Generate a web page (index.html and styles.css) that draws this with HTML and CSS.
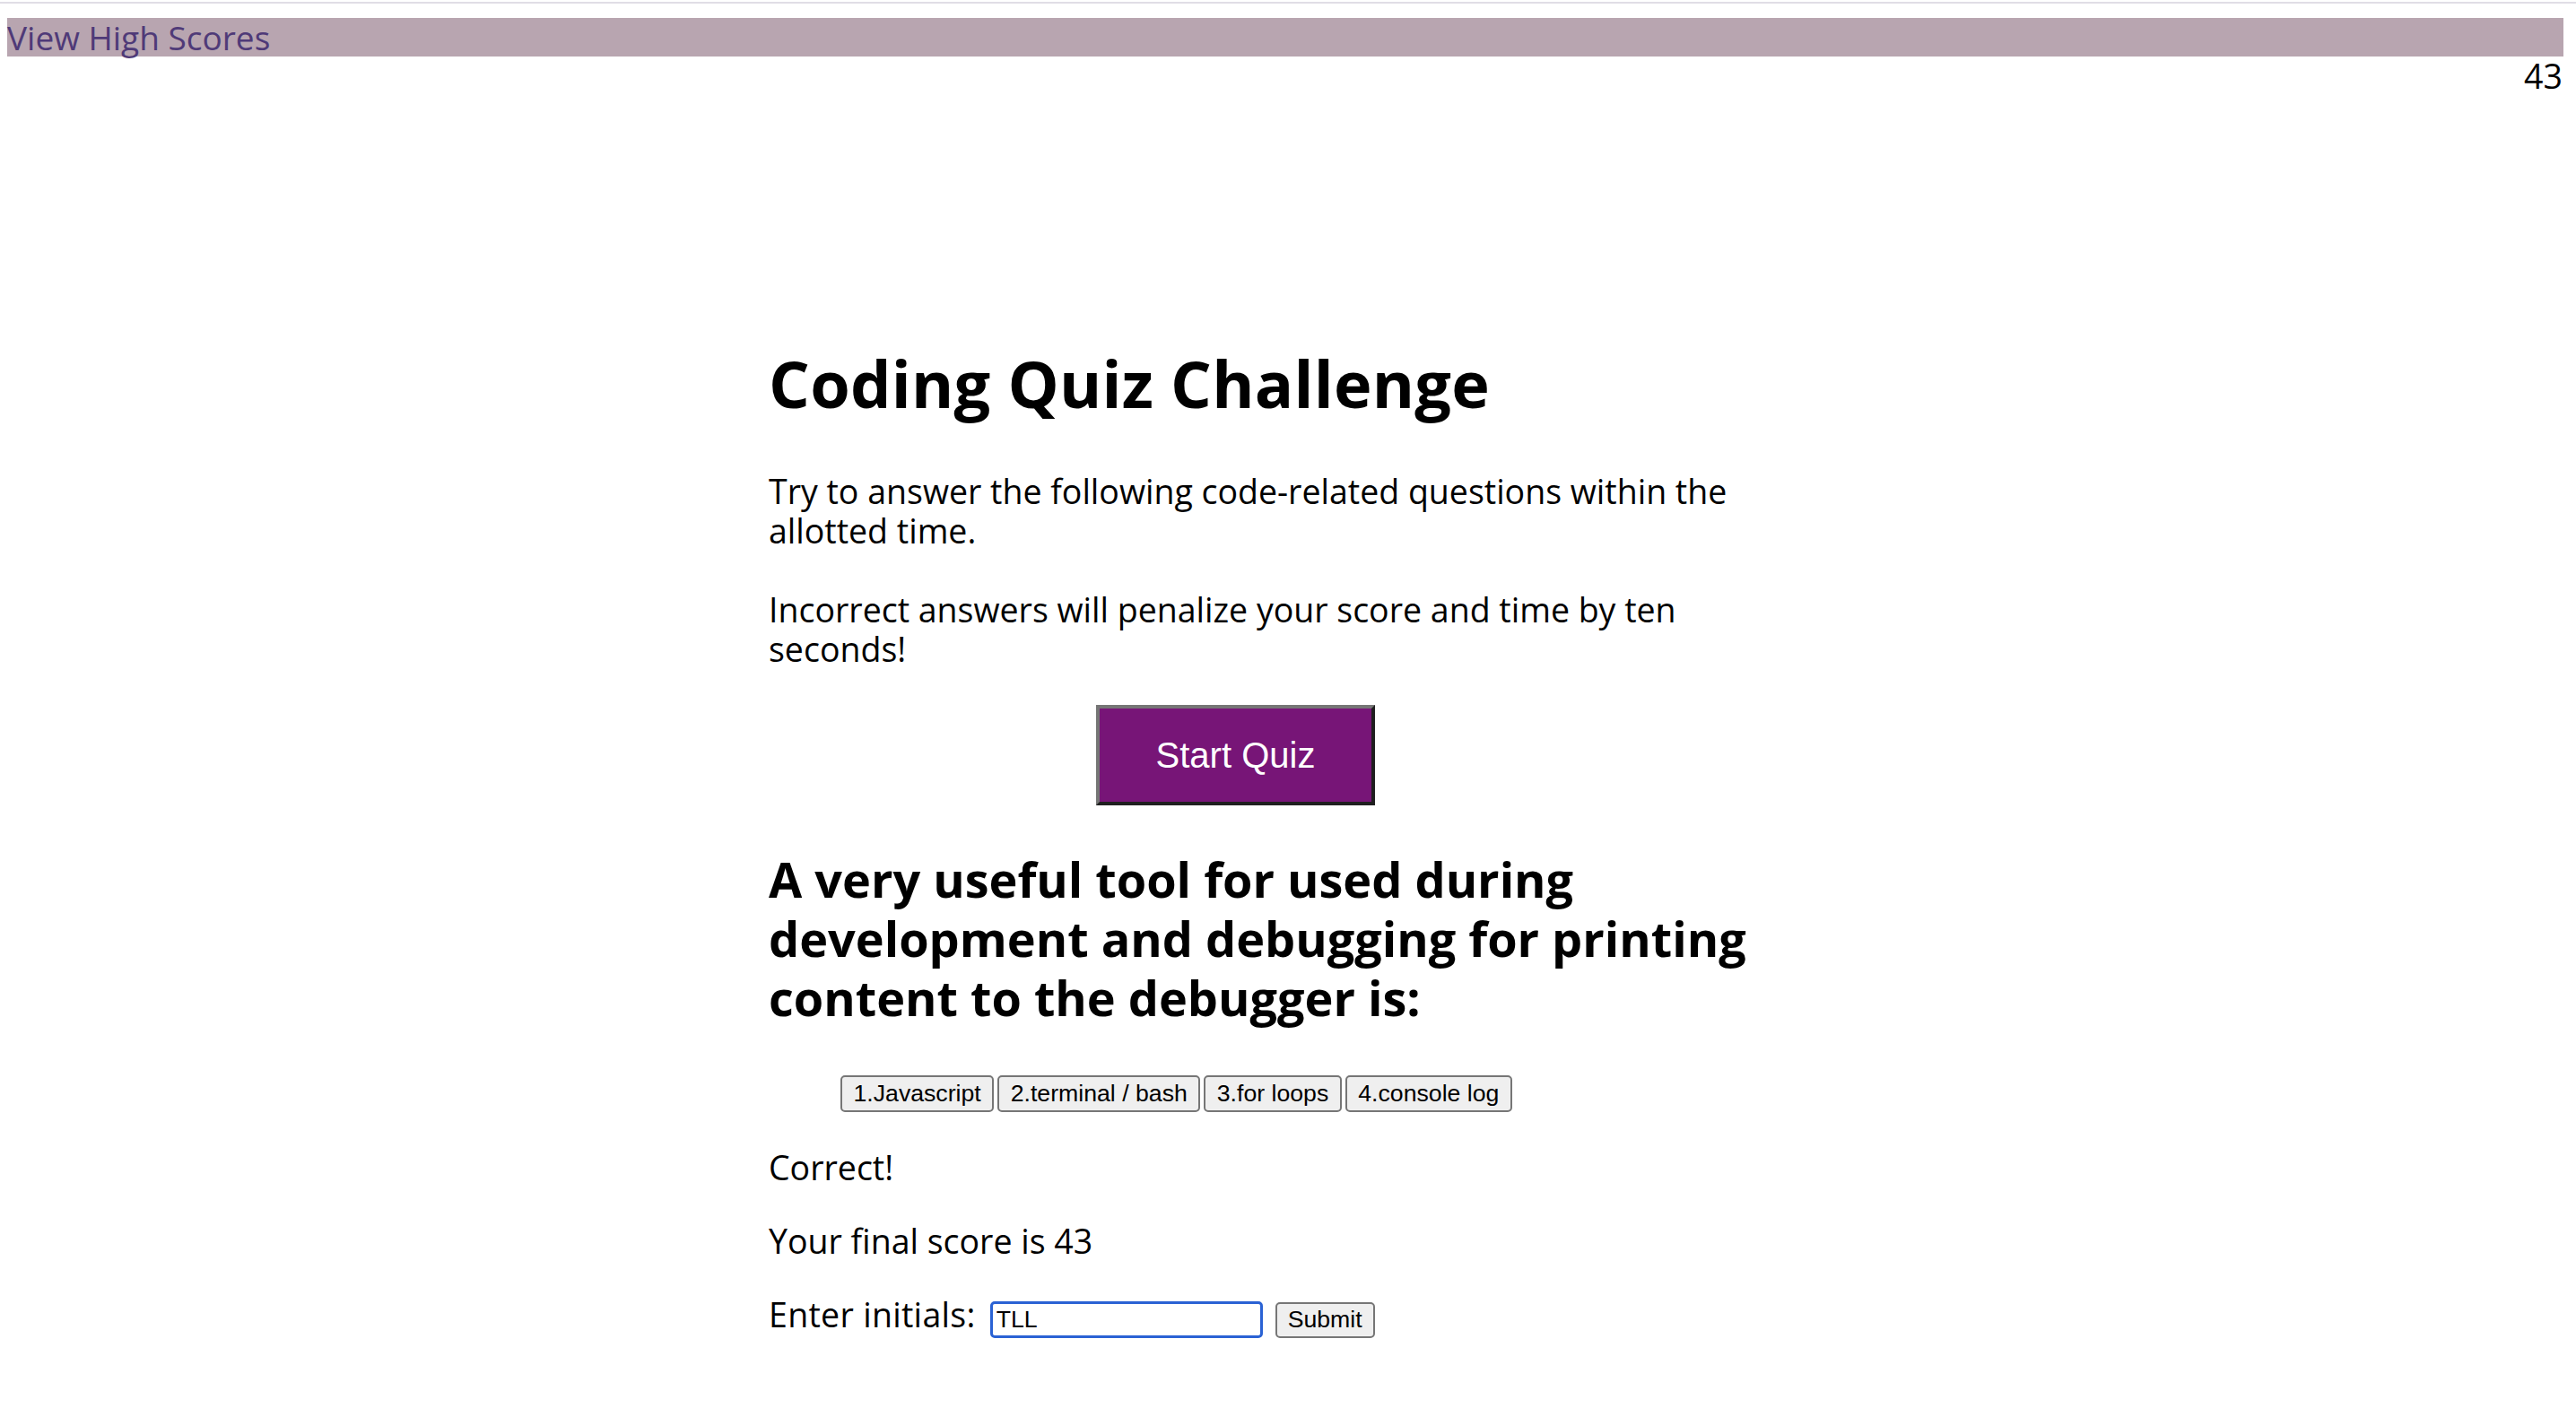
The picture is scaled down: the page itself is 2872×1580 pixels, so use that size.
FILE: index.html
```html
<!DOCTYPE html>
<html lang="en">
<head>
<meta charset="utf-8">
<title>Coding Quiz Challenge</title>
<link rel="stylesheet" href="styles.css">
</head>
<body>
<div class="topline"></div>
<header class="bar"><a class="highscores" href="#">View High Scores</a></header>
<div class="timer">43</div>
<main class="quiz">
  <h1 class="title">Coding Quiz Challenge</h1>
  <p class="intro">Try to answer the following code-related questions within the allotted time.</p>
  <p class="intro second">Incorrect answers will penalize your score and time by ten seconds!</p>
  <button class="start">Start Quiz</button>
  <h2 class="question">A very useful tool for used during development and debugging for printing content to the debugger is:</h2>
  <ul class="answers">
    <li><button class="answer">1.Javascript</button></li>
    <li><button class="answer">2.terminal / bash</button></li>
    <li><button class="answer">3.for loops</button></li>
    <li><button class="answer">4.console log</button></li>
  </ul>
  <p class="msg feedback">Correct!</p>
  <p class="msg">Your final score is 43</p>
  <form class="msg initials">
    <label class="initials-label" for="ini">Enter initials:</label>
    <input class="initials-input" id="ini" type="text" value="TLL">
    <button class="submit" type="button">Submit</button>
  </form>
</main>
</body>
</html>
```
FILE: styles.css
```css
html, body {
  margin: 0;
  padding: 0;
  background: #ffffff;
}
body {
  font-family: "Open Sans", "Noto Sans", sans-serif;
  color: #000;
}
.topline {
  height: 2px;
  margin-top: 2px;
  background: #e0dde6;
}
.bar {
  margin: 16px 14px 0 8px;
  height: 43px;
  background: #b8a5b0;
  font-size: 37px;
  line-height: 43px;
}
.highscores {
  color: #4f3a78;
  text-decoration: none;
}
.timer {
  margin-right: 15px;
  text-align: right;
  font-size: 37.5px;
  line-height: 44px;
  height: 44px;
}
.quiz {
  width: 1158px;
  margin: 277px auto 0;
}
.title {
  margin: 0;
  font-size: 72px;
  line-height: 86px;
  font-weight: 700;
  letter-spacing: 0.25px;
}
.intro {
  margin: 56px 0 0;
  font-size: 37.5px;
  line-height: 44px;
}
.intro.second {
  margin-top: 44px;
}
.start {
  display: block;
  box-sizing: border-box;
  margin: 40px 0 0 365px;
  width: 311px;
  height: 112px;
  padding: 0;
  background: #771577;
  color: #fff;
  font-family: "Liberation Sans", Arial, sans-serif;
  font-size: 40px;
  border-style: solid;
  border-width: 4px;
  border-color: #767676 #1f1f1f #1f1f1f #767676;
}
.question {
  margin: 49px 0 0;
  font-size: 54px;
  line-height: 66px;
  font-weight: 700;
}
.answers {
  list-style: none;
  margin: 54px 0 0;
  padding: 0 0 0 80px;
  display: flex;
  gap: 4px;
}
.answer, .submit {
  box-sizing: border-box;
  height: 41px;
  padding: 0 12px;
  background: #efefef;
  color: #000;
  border: 2px solid #767676;
  border-radius: 5px;
  font-family: "Liberation Sans", Arial, sans-serif;
  font-size: 26.67px;
}
.answer {
  padding: 0 12.5px;
}
.msg {
  margin: 40px 0 0;
  font-size: 37.5px;
  line-height: 44px;
}
.msg + .msg {
  margin-top: 38px;
}
.initials {
  display: flex;
  align-items: baseline;
}
.initials-label {
  letter-spacing: 0.3px;
}
.initials-input {
  box-sizing: border-box;
  width: 304px;
  height: 41px;
  margin-left: 16px;
  padding: 0 4px;
  border: 3px solid #2a62d4;
  border-radius: 5px;
  outline: none;
  font-family: "Liberation Sans", Arial, sans-serif;
  font-size: 26.67px;
  color: #000;
}
.submit {
  height: 40px;
  margin-left: 14px;
}
```
